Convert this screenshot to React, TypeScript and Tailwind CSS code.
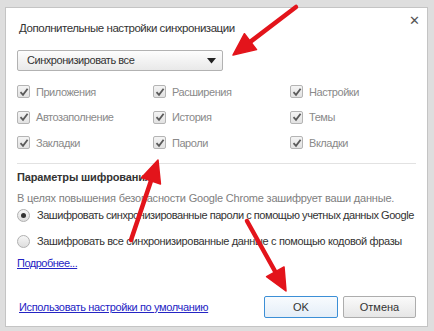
import React from "react";

const font = { fontFamily: '"Liberation Sans", Arial, sans-serif' };

// red annotation arrow drawn from tail to tip
const Arrow = ({ x1, y1, x2, y2 }: { x1: number; y1: number; x2: number; y2: number }) => {
  const dx = x2 - x1;
  const dy = y2 - y1;
  const len = Math.hypot(dx, dy);
  const ux = dx / len;
  const uy = dy / len;
  const headLen = 22;
  const headW = 10;
  const bx = x2 - ux * headLen;
  const by = y2 - uy * headLen;
  const pts = `${x2},${y2} ${bx - uy * headW},${by + ux * headW} ${bx + uy * headW},${by - ux * headW}`;
  return (
    <g>
      <line x1={x1} y1={y1} x2={bx + ux * 2} y2={by + uy * 2} stroke="#e3141b" strokeWidth={4.5} strokeLinecap="round" />
      <polygon points={pts} fill="#e3141b" stroke="#e3141b" strokeWidth={1.5} strokeLinejoin="round" />
    </g>
  );
};

const Check = ({ label }: { label: string }) => (
  <div className="flex items-center h-[25.5px]">
    <span className="w-[13px] h-[13px] border border-[#b4b4b4] bg-gradient-to-b from-[#f4f4f4] to-[#e2e2e2] rounded-[2px] flex items-center justify-center">
      <svg width="10" height="10" viewBox="0 0 10 10">
        <path d="M1.5 5.2 L4 7.8 L8.6 1.8" fill="none" stroke="#5a5a5a" strokeWidth="1.8" />
      </svg>
    </span>
    <span className="ml-[6px] text-[11px] text-[#8a8a8a] tracking-[-0.45px] whitespace-nowrap">{label}</span>
  </div>
);

const Radio = ({ checked, label, tight }: { checked: boolean; label: string; tight?: boolean }) => (
  <div className="flex items-center h-[26px]">
    <span className="shrink-0 w-[13px] h-[13px] rounded-full border border-[#b0b0b0] bg-gradient-to-b from-[#f6f6f6] to-[#dedede] flex items-center justify-center">
      {checked && <span className="w-[5px] h-[5px] rounded-full bg-[#333]" />}
    </span>
    <span className={`ml-[7px] text-[11px] text-[#333] whitespace-nowrap ${tight ? "tracking-[-0.45px]" : "tracking-[-0.35px]"}`}>{label}</span>
  </div>
);

export default function App() {
  return (
    <div className="relative w-[434px] h-[331px] bg-[#dedede] pt-[7px] pl-[5px] pr-[6px] pb-[4px] overflow-hidden" style={font}>
      <div className="h-full bg-white border border-[#c4c4c4] flex flex-col pl-[11px] pr-[11px]">
        <div className="flex justify-between h-[20px] mt-[9px] ml-[2px]">
          <span className="self-center mt-[3px] text-[11.5px] text-[#333] tracking-[-0.45px] whitespace-nowrap">Дополнительные настройки синхронизации</span>
          <span className="mt-[-3px] mr-[-4px] text-[13px] text-[#555] leading-none">✕</span>
        </div>

        <div className="mt-[13px] w-[206px] h-[21px] border border-[#b2b2b2] rounded-[2px] bg-gradient-to-b from-[#fdfdfd] to-[#e9e9e9] flex items-center justify-between pl-[9px] pr-[6px]">
          <span className="text-[11px] text-[#333] tracking-[-0.45px]">Синхронизировать все</span>
          <svg width="9" height="6" viewBox="0 0 9 6">
            <path d="M0 0 H9 L4.5 5.5 Z" fill="#222" />
          </svg>
        </div>

        <div className="mt-[8px] grid grid-cols-[136px_137px_1fr]">
          <Check label="Приложения" />
          <Check label="Расширения" />
          <Check label="Настройки" />
          <Check label="Автозаполнение" />
          <Check label="История" />
          <Check label="Темы" />
          <Check label="Закладки" />
          <Check label="Пароли" />
          <Check label="Вкладки" />
        </div>

        <div className="mt-[7px] h-px bg-[#e2e2e2]" />

        <div className="mt-[5px] text-[11px] font-bold text-[#333] leading-[16px] tracking-[-0.15px] whitespace-nowrap">Параметры шифрования</div>
        <div className="mt-[5px] text-[11px] text-[#808080] leading-[16px] tracking-[-0.2px] whitespace-nowrap">
          В целях повышения безопасности Google Chrome зашифрует ваши данные.
        </div>

        <div className="mt-[-3px]">
          <Radio checked tight label="Зашифровать синхронизированные пароли с помощью учетных данных Google" />
          <Radio checked={false} label="Зашифровать все синхронизированные данные с помощью кодовой фразы" />
        </div>
        <div className="text-[11px] text-[#2424c4] underline leading-[16px] tracking-[-0.5px] whitespace-nowrap">Подробнее...</div>

        <div className="mt-auto mb-[8px] flex items-center justify-between">
          <span className="ml-[2px] text-[11px] text-[#2424c4] underline whitespace-nowrap tracking-[-0.35px]">Использовать настройки по умолчанию</span>
          <div className="flex gap-[5px]">
            <button className="w-[74px] h-[22px] border border-[#3c8fd6] rounded-[2px] bg-gradient-to-b from-[#f8fbfe] to-[#e4eef8] text-[11px] text-[#333]">
              OK
            </button>
            <button className="w-[73px] h-[22px] border border-[#adadad] rounded-[2px] bg-gradient-to-b from-[#fafafa] to-[#e6e6e6] text-[11px] text-[#333]">
              Отмена
            </button>
          </div>
        </div>
      </div>

      <svg className="absolute inset-0 pointer-events-none" width="434" height="331">
        <Arrow x1={296} y1={7} x2={233} y2={55} />
        <Arrow x1={131} y1={240} x2={158} y2={160} />
        <Arrow x1={247} y1={221} x2={286} y2={291} />
      </svg>
    </div>
  );
}
